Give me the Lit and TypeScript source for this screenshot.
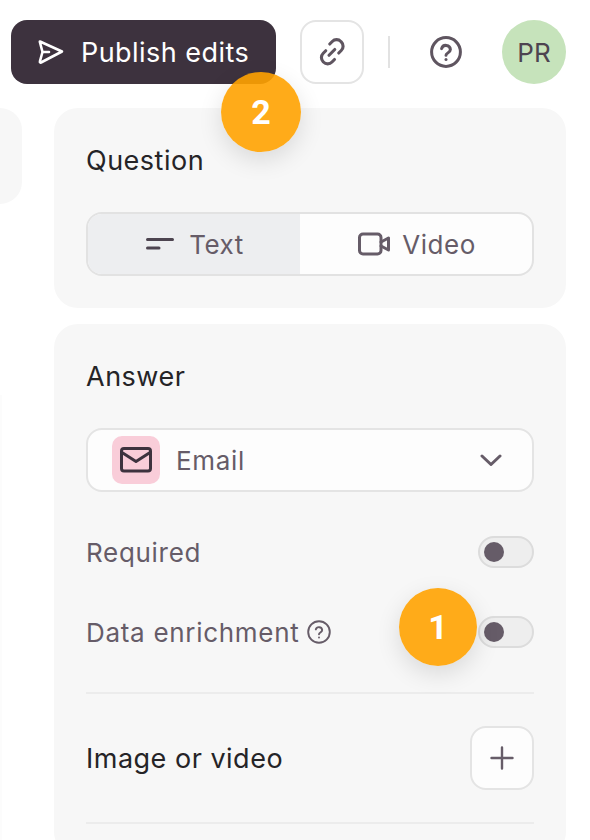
import { LitElement, html, css } from "lit";
import { customElement } from "lit/decorators.js";

@customElement("app-root")
export class AppRoot extends LitElement {
  static styles = css`
    :host { display: block; width: 590px; height: 840px; overflow: hidden; position: relative; background: #fff; font-family: Inter, "Liberation Sans", sans-serif; color: #665c68; letter-spacing: 0.7px; }
    * { box-sizing: border-box; }
    svg { display: block; fill: none; stroke: currentColor; stroke-linecap: round; stroke-linejoin: round; }
    .header { display: flex; align-items: center; height: 64px; margin: 20px 24px 24px 11px; }
    .publish { width: 265px; height: 64px; border-radius: 16px; background: #3d323e; color: #fff; display: flex; align-items: center; padding-left: 27px; gap: 17px; font-size: 27px; font-weight: 400; letter-spacing: 0.45px; }
    .link { width: 64px; height: 64px; margin-left: 24px; border: 2px solid #e4e4e4; border-radius: 16px; display: flex; align-items: center; justify-content: center; color: #5f5560; }
    .sep { width: 2px; height: 32px; background: #e2e2e2; margin-left: 24px; }
    .help { margin-left: 40px; color: #5f5560; }
    .avatar { width: 64px; height: 64px; border-radius: 50%; margin-left: 40px; background: #c6e3bb; color: #4d4450; display: flex; align-items: center; justify-content: center; font-size: 26px; letter-spacing: 0; font-weight: 400; }
    .body { display: flex; gap: 32px; align-items: flex-start; }
    .side { width: 22px; flex: none; display: flex; flex-direction: column; }
    .stub { height: 96px; background: #f7f7f7; border-radius: 0 24px 24px 0; }
    .edge { width: 2px; height: 460px; margin-top: 191px; background: #fcfcfc; }
    .col { width: 512px; display: flex; flex-direction: column; gap: 16px; }
    .card { background: #f7f7f7; border-radius: 24px; padding: 32px; }
    .q { height: 200px; }
    .title { font-size: 27px; line-height: 42px; font-weight: 400; color: #252427; height: 40px; letter-spacing: 0.5px; }
    .seg { display: flex; height: 64px; margin-top: 32px; border: 2px solid #e2e2e2; border-radius: 16px; overflow: hidden; background: #fdfdfd; font-size: 26px; letter-spacing: 0.55px; }
    .seg > div { flex: 0 0 212px; display: flex; align-items: center; justify-content: center; gap: 15px; padding-left: 2px; }
    .seg > div:last-child { flex: 1; gap: 12px; }
    .seg .on { background: #edeef0; }
    .select { display: flex; align-items: center; height: 64px; margin-top: 32px; border: 2px solid #e4e4e4; border-radius: 16px; background: #fdfdfd; padding: 0 30px 0 24px; font-size: 26px; }
    .mail { width: 48px; height: 48px; border-radius: 10px; background: #f9cdd9; display: flex; align-items: center; justify-content: center; color: #3d323e; margin-right: 16px; }
    .select span { flex: 1; }
    .row { display: flex; align-items: center; justify-content: space-between; height: 32px; font-size: 26px; }
    .row.first { margin-top: 44px; }
    .row.next { margin-top: 48px; }
    .label { display: flex; align-items: center; gap: 8px; }
    .toggle { width: 56px; height: 32px; border-radius: 16px; border: 2px solid #dcdcdc; background: #eeeeee; display: flex; align-items: center; padding-left: 4px; }
    .toggle i { width: 20px; height: 20px; border-radius: 50%; background: #665c68; }
    .rule { height: 2px; background: #ececec; }
    .rule.a { margin-top: 44px; }
    .media { display: flex; align-items: center; justify-content: space-between; height: 64px; margin: 32px 0; }
    .plus { width: 64px; height: 64px; border: 2px solid #e4e4e4; border-radius: 16px; background: #fdfdfd; display: flex; align-items: center; justify-content: center; }
    .badge { position: absolute; border-radius: 50%; background: rgba(255, 162, 0, 0.9); color: #fff; font-family: Roboto, sans-serif; font-weight: 700; font-size: 34px; letter-spacing: 0; display: flex; align-items: center; justify-content: center; box-shadow: 0 8px 24px rgba(0,0,0,.12); }
    .b1 { left: 399px; top: 588px; width: 78px; height: 78px; }
    .b2 { left: 221px; top: 72px; width: 80px; height: 80px; }
  `;

  render() {
    return html`
      <div class="header">
        <div class="publish">
          <svg width="26" height="26" viewBox="0 0 26 26" stroke-width="2.600"><path d="M2 2.500 L24 12.500 L3 23.500 Q1.500 24 2 22 L4.500 13 L2 3.500 Q1.700 2.300 2 2.500Z M4.500 13 H11"/></svg>
          <span>Publish edits</span>
        </div>
        <div class="link">
          <svg width="30" height="30" viewBox="0 0 24 24" stroke-width="2.500"><path d="M10.200 5.600l2-2a4.800 4.800 0 0 1 6.900 0l.3.3a4.800 4.800 0 0 1 0 6.900l-2 2"/><path d="M7 11l-2 2a4.800 4.800 0 0 0 0 6.900l.1.1a4.800 4.800 0 0 0 6.900 0l2-2"/><path d="M9.600 14.600l4.600-4.600"/></svg>
        </div>
        <div class="sep"></div>
        <div class="help">
          <svg width="32" height="32" viewBox="0 0 32 32" stroke-width="3"><circle cx="16" cy="16" r="14.400"/><path d="M11.600 12.600a4.500 4.500 0 0 1 8.800 1c0 3-4.400 3.400-4.400 5.600"/><path d="M16 23.400v.2"/></svg>
        </div>
        <div class="avatar">PR</div>
      </div>
      <div class="body">
        <div class="side"><div class="stub"></div><div class="edge"></div></div>
        <div class="col">
          <div class="card q">
            <div class="title">Question</div>
            <div class="seg">
              <div class="on">
                <svg width="28" height="14" viewBox="0 0 28 14" stroke-width="3" color="#4d4450"><path d="M1.500 2.500H26.500M1.500 11H13"/></svg>
                <span>Text</span>
              </div>
              <div>
                <svg width="32" height="24" viewBox="0 0 32 24" stroke-width="3"><rect x="1.500" y="2" width="21.500" height="20" rx="3.500"/><path d="M23 10L30.500 6V18L23 14"/></svg>
                <span>Video</span>
              </div>
            </div>
          </div>
          <div class="card">
            <div class="title">Answer</div>
            <div class="select">
              <div class="mail">
                <svg width="32" height="26" viewBox="0 0 32 26" stroke-width="3"><rect x="1.500" y="1.500" width="29" height="22.500" rx="2.500"/><path d="M2 5.500L16 14.500L30 5.500"/></svg>
              </div>
              <span>Email</span>
              <svg width="22" height="12" viewBox="0 0 22 12" stroke-width="3"><path d="M2 2L11 10.500L20 2"/></svg>
            </div>
            <div class="row first"><div class="label">Required</div><div class="toggle"><i></i></div></div>
            <div class="row next">
              <div class="label">Data enrichment
                <svg width="24" height="24" viewBox="0 0 24 24" stroke-width="1.900"><circle cx="12" cy="12" r="10.800"/><path d="M8.800 9.400a3.300 3.300 0 0 1 6.400.7c0 2.200-3.200 2.500-3.200 4.100"/><path d="M12 17.400v.1"/></svg>
              </div>
              <div class="toggle"><i></i></div>
            </div>
            <div class="rule a"></div>
            <div class="media">
              <div class="title">Image or video</div>
              <div class="plus"><svg width="24" height="24" viewBox="0 0 24 24" stroke-width="2.400"><path d="M12 1.500V22.500M1.500 12H22.500"/></svg></div>
            </div>
            <div class="rule"></div>
          </div>
        </div>
      </div>
      <div class="badge b1">1</div>
      <div class="badge b2">2</div>
    `;
  }
}
